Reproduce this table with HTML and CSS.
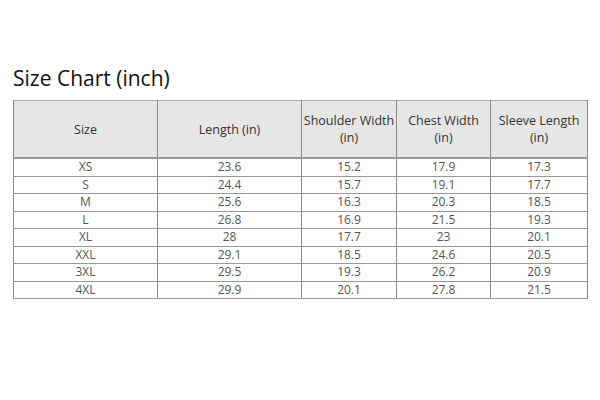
FILE: index.html
```html
<!DOCTYPE html>
<html>
<head>
<meta charset="utf-8">
<link rel="stylesheet" href="styles.css">
</head>
<body>
<div class="page">
  <h1 class="title">Size Chart (inch)</h1>
  <table class="chart">
    <colgroup>
      <col class="c1"><col class="c2"><col class="c3"><col class="c4"><col class="c5">
    </colgroup>
    <thead>
      <tr><th>Size</th><th>Length (in)</th><th>Shoulder Width<br>(in)</th><th>Chest Width<br>(in)</th><th>Sleeve Length<br>(in)</th></tr>
    </thead>
    <tbody>
      <tr><td>XS</td><td>23.6</td><td>15.2</td><td>17.9</td><td>17.3</td></tr>
      <tr><td>S</td><td>24.4</td><td>15.7</td><td>19.1</td><td>17.7</td></tr>
      <tr><td>M</td><td>25.6</td><td>16.3</td><td>20.3</td><td>18.5</td></tr>
      <tr><td>L</td><td>26.8</td><td>16.9</td><td>21.5</td><td>19.3</td></tr>
      <tr><td>XL</td><td>28</td><td>17.7</td><td>23</td><td>20.1</td></tr>
      <tr><td>XXL</td><td>29.1</td><td>18.5</td><td>24.6</td><td>20.5</td></tr>
      <tr><td>3XL</td><td>29.5</td><td>19.3</td><td>26.2</td><td>20.9</td></tr>
      <tr><td>4XL</td><td>29.9</td><td>20.1</td><td>27.8</td><td>21.5</td></tr>
    </tbody>
  </table>
</div>
</body>
</html>
```
FILE: styles.css
```css
html, body {
  margin: 0;
  padding: 0;
  background: #ffffff;
}
.page {
  padding: 66px 13px 0 13px;
  font-family: "Open Sans", "Noto Sans", sans-serif;
}
.title {
  margin: 0 0 10px 0;
  font-size: 21px;
  font-weight: 400;
  line-height: 24px;
  color: #111;
}
.chart {
  border-collapse: collapse;
  width: 574px;
  table-layout: fixed;
  font-size: 12px;
  color: #555;
}
.c1 { width: 144px; }
.c2 { width: 144px; }
.c3 { width: 95px; }
.c4 { width: 94px; }
.c5 { width: 97px; }
.chart th {
  background: #e6e6e6;
  font-weight: 400;
  font-size: 12.5px;
  line-height: 17px;
  color: #333;
  height: 56px;
  padding: 0;
  border: 1px solid #8a8a8a;
  border-bottom: 2px solid #9a9a9a;
  border-top: 1px solid #aaa;
}
.chart td {
  text-align: center;
  height: 16.5px;
  padding: 0;
  line-height: 16px;
  border: 1px solid #8a8a8a;
  border-top: 1px solid #999;
  border-bottom: 1px solid #999;
}
```
